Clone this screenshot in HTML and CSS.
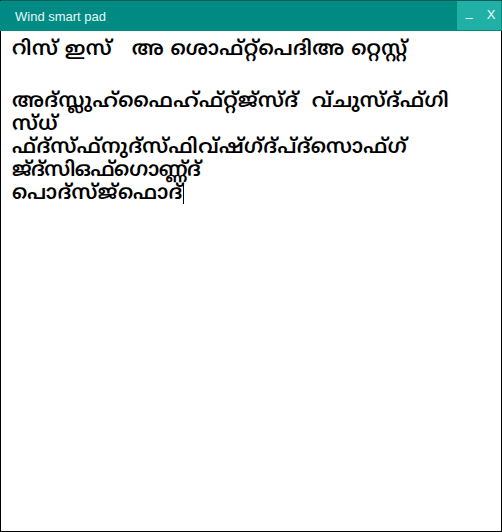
FILE: index.html
```html
<!DOCTYPE html>
<html>
<head>
<meta charset="utf-8">
<link rel="stylesheet" href="styles.css">
</head>
<body>
<div class="window">
  <div class="titlebar">
    <span class="title">Wind smart pad</span>
    <div class="controls">
      <span class="btn min">–</span>
      <span class="btn close">X</span>
    </div>
  </div>
  <div class="editor">
    <div class="line l1">റിസ് ഇസ്   അ ശൊഫ്റ്റ്പെദിഅ റ്റെസ്റ്റ്</div>
    <div class="line l2">&nbsp;</div>
    <div class="line">അദ്സ്ലുഹ്ഫൈഹ്ഫ്റ്റ്ജ്സ്ദ്  വ്ചുസ്ദ്ഫ്ഗി</div>
    <div class="line">സ്ധ്</div>
    <div class="line">ഫ്ദ്സ്ഫ്നുദ്സ്ഫിവ്ഷ്ഗ്ദ്പ്ദ്സൊഫ്ഗ്</div>
    <div class="line l6">ജ്ദ്സിഒഫ്ഗൊണ്ണ്ദ്</div>
    <div class="line">പൊദ്സ്ജ്ഫൊദ്<span class="caret"></span></div>
  </div>
</div>
</body>
</html>
```
FILE: styles.css
```css
html, body {
  margin: 0;
  padding: 0;
  background: #ffffff;
}
.window {
  width: 502px;
  height: 532px;
  box-sizing: border-box;
  border: 1px solid #000000;
  border-top: 1px solid #0b5e58;
  display: flex;
  flex-direction: column;
  background: #ffffff;
}
.titlebar {
  height: 30px;
  background: #008a84;
  display: flex;
  align-items: stretch;
  justify-content: space-between;
  margin: 0 -1px;
}
.title {
  font-family: "Liberation Sans", Arial, sans-serif;
  font-size: 13px;
  color: #e8f6f5;
  padding-left: 15px;
  padding-top: 8px;
}
.controls {
  display: flex;
  background: #21b0a6;
  height: 29px;
  margin-right: 1px;
}
.btn {
  font-family: "Liberation Sans", Arial, sans-serif;
  color: #f2fbfa;
  font-size: 13px;
  display: flex;
  align-items: center;
  justify-content: center;
  width: 22px;
}
.min { padding-top: 4px; width: 24px; }
.close { width: 20px; padding-bottom: 2px; }
.editor {
  padding: 8px 11px;
  font-family: "Noto Sans Malayalam", "Noto Sans", "DejaVu Sans", sans-serif;
  font-size: 20px;
  letter-spacing: 0.4px;
  font-weight: 600;
  color: #000000;
  line-height: 23px;
}
.line { white-space: pre; height: 23px; }
.l1 { height: 24px; line-height: 24px; }
.l2 { height: 28px; line-height: 28px; }
.l6 { letter-spacing: -0.5px; }
.caret {
  display: inline-block;
  width: 1px;
  height: 21px;
  background: #000;
  vertical-align: middle;
}
```
